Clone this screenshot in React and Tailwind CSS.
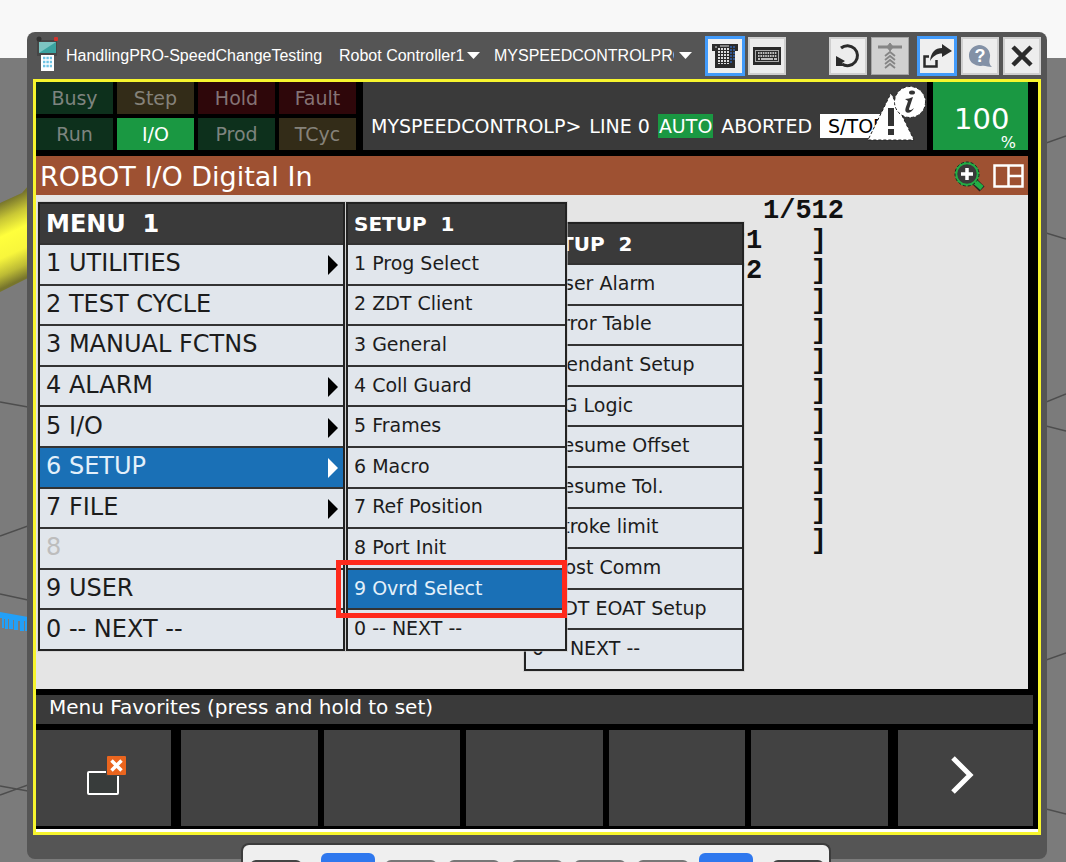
import React from "react";

const indicators = [
  { label: "Busy", style: "bg-[#0d301c] text-[#7d847f]" },
  { label: "Step", style: "bg-[#332c18] text-[#85827a]" },
  { label: "Hold", style: "bg-[#2e070a] text-[#857375]" },
  { label: "Fault", style: "bg-[#2e070a] text-[#857375]" },
  { label: "Run", style: "bg-[#0d301c] text-[#7d847f]" },
  { label: "I/O", style: "bg-[#1a9842] text-white" },
  { label: "Prod", style: "bg-[#0d301c] text-[#7d847f]" },
  { label: "TCyc", style: "bg-[#332c18] text-[#85827a]" },
];

const mainMenu = [
  { label: "1 UTILITIES", sub: true },
  { label: "2 TEST CYCLE" },
  { label: "3 MANUAL FCTNS" },
  { label: "4 ALARM", sub: true },
  { label: "5 I/O", sub: true },
  { label: "6 SETUP", sub: true, active: true },
  { label: "7 FILE", sub: true },
  { label: "8", disabled: true },
  { label: "9 USER" },
  { label: "0 -- NEXT --" },
];

const setupOne = [
  { label: "1 Prog Select" },
  { label: "2 ZDT Client" },
  { label: "3 General" },
  { label: "4 Coll Guard" },
  { label: "5 Frames" },
  { label: "6 Macro" },
  { label: "7 Ref Position" },
  { label: "8 Port Init" },
  { label: "9 Ovrd Select", active: true },
  { label: "0 -- NEXT --" },
];

const setupTwo = [
  { label: "1 User Alarm" },
  { label: "2 Error Table" },
  { label: "3 iPendant Setup" },
  { label: "4 BG Logic" },
  { label: "5 Resume Offset" },
  { label: "6 Resume Tol." },
  { label: "7 Stroke limit" },
  { label: "8 Host Comm" },
  { label: "9 ZDT EOAT Setup" },
  { label: "0 -- NEXT --" },
];

const ioRows = ["r1   ]", "r2   ]", "]", "]", "]", "]", "]", "]", "]", "]", "]"];

const keys = [
  "w-[52px] mt-[9px] bg-[#6d6d6d] border-2 border-[#444] mr-[19px]",
  "w-[54px] mt-[2px] bg-[#2f78ee] mr-[10px]",
  "w-[52px] mt-[9px] bg-[#f3f3f3] border-2 border-[#777] mr-[11px]",
  "w-[52px] mt-[9px] bg-[#f3f3f3] border-2 border-[#777] mr-[11px]",
  "w-[52px] mt-[9px] bg-[#f3f3f3] border-2 border-[#777] mr-[11px]",
  "w-[52px] mt-[9px] bg-[#f3f3f3] border-2 border-[#777] mr-[11px]",
  "w-[52px] mt-[9px] bg-[#f3f3f3] border-2 border-[#777] mr-[10px]",
  "w-[54px] mt-[2px] bg-[#2f78ee] mr-[19px]",
  "w-[52px] mt-[9px] bg-[#6d6d6d] border-2 border-[#444]",
];

// robot cell seen behind the pendant window
const Scene = () => (
  <>
    <svg className="absolute left-0 top-0" width="28" height="862" fill="none" aria-hidden="true">
      <defs>
        <linearGradient id="pipe" gradientUnits="userSpaceOnUse" x1="0" y1="203" x2="33" y2="274">
          <stop offset="0" stopColor="#77752c" />
          <stop offset="0.2" stopColor="#c9c735" />
          <stop offset="0.4" stopColor="#ffff3c" />
          <stop offset="0.65" stopColor="#f8f63c" />
          <stop offset="0.85" stopColor="#bdbb35" />
          <stop offset="1" stopColor="#77752c" />
        </linearGradient>
      </defs>
      <path d="M0 203 L22 193 L28 186 V278 L0 292 Z" fill="url(#pipe)" />
      <path d="M0 402 L28 407 M0 536 L28 526 M0 594 L28 600 M0 786 L28 791 M0 795 L28 785" stroke="#4d4d4d" strokeWidth="1.5" />
      <path d="M0 612 L28 617 V631 H25 V621 H24 V631 H20 V621 H18 V630 H14 V620 H13 V629 H9 V619 H8 V629 H5 V619 H4 V628 H2 V618 H0 Z" fill="#22a0f8" />
    </svg>
    <svg className="absolute right-0 top-0" width="20" height="862" fill="none" stroke="#4d4d4d" strokeWidth="1.5" aria-hidden="true">
      <path d="M0 143 L20 136 M0 233 L20 239 M0 402 L20 394 M0 426 L20 431 M0 660 L20 653 M0 809 L20 814" />
    </svg>
  </>
);

const Menu = ({ title, items, className, titleSize, rowSize }) => (
  <nav className={"absolute flex h-[449px] flex-col border-2 border-[#222] outline outline-1 outline-[#c9c9c9]/60 " + className}>
    <h2 className={"flex h-[39px] shrink-0 items-center whitespace-pre bg-[#3a3a3a] pl-[6px] font-bold text-white " + titleSize}>{title}</h2>
    <ul className="grid flex-1 auto-rows-fr">
      {items.map((item) => (
        <li key={item.label} className="flex border-t-2 border-[#333]">
          <button
            disabled={item.disabled}
            className={
              "flex w-full items-center justify-between whitespace-nowrap pb-[2px] pl-[6px] pr-[5px] text-left leading-none " +
              rowSize +
              (item.active ? " bg-[#1a70b6] text-[#e4f0fa]" : item.disabled ? " bg-[#e1e6ec] text-[#bdbdbd]" : " bg-[#e1e6ec] text-[#1c1c1c]")
            }
          >
            {item.label}
            {item.sub && (
              <svg width="10" height="20" viewBox="0 0 10 20" className={item.active ? "mt-1 text-white" : "mt-1 text-black"}>
                <path d="M0 0 L10 10 L0 20 Z" fill="currentColor" />
              </svg>
            )}
          </button>
        </li>
      ))}
    </ul>
  </nav>
);

const ToolButton = ({ label, on, dim, children }) => (
  <button
    aria-label={label}
    className={
      "flex shrink-0 items-center justify-center " +
      (on ? "h-10 w-10 border-3 border-[#429bfb] bg-[#efefef]" : dim ? "h-[38px] w-[38px] border border-[#a5a5a5] bg-[#d0d0d0]" : "h-[38px] w-[38px] border-2 border-[#cfcfcf] bg-[#ededed]")
    }
  >
    {children}
  </button>
);

const Caret = () => (
  <svg width="13" height="7" viewBox="0 0 13 7" className="shrink-0" aria-hidden="true">
    <path d="M0 0 H13 L6.5 7 Z" fill="#fff" />
  </svg>
);

const TitleBar = () => (
  <header className="flex h-[47px] items-center pl-[3px] font-['Liberation_Sans',Arial,sans-serif] text-base text-white">
    <svg width="22" height="36" viewBox="0 0 22 36" className="mb-[3px] mr-2 shrink-0" aria-hidden="true">
      <path d="M1 4 H21 V20 H1 Z" fill="#464646" />
      <circle cx="3" cy="3" r="2.5" fill="#333" />
      <rect x="18" y="1" width="4" height="4" rx="1" fill="#d5332c" />
      <rect x="3" y="6" width="17" height="11" fill="#3aa3a0" />
      <path d="M3 6 H20 L3 17 Z" fill="#7cc5c2" />
      <rect x="5" y="19" width="13" height="16" fill="#fff" />
      <path d="M7 22 H16 M7 26 H16 M7 30 H16" stroke="#6fc4e4" strokeWidth="2.5" strokeDasharray="2.4 1" />
    </svg>
    <h1 className="w-[273px] shrink-0 whitespace-nowrap">HandlingPRO-SpeedChangeTesting</h1>
    <select aria-label="Controller" className="w-[128px] shrink-0 appearance-none bg-transparent">
      <option>Robot Controller1</option>
    </select>
    <Caret />
    <select aria-label="Program" className="ml-[14px] w-[180px] shrink-0 appearance-none overflow-hidden bg-transparent">
      <option>MYSPEEDCONTROLPROG</option>
    </select>
    <span className="ml-[5px]"><Caret /></span>
    <div className="ml-[13px] flex items-center gap-[3px]">
      <ToolButton label="Show keypad" on>
        <svg width="28" height="26" viewBox="0 0 28 26">
          <path d="M1 1 H27 V8 H24 V25 H4 V8 H1 Z" fill="#2b2b2b" />
          <path d="M8 5 V21 M11 5 V21 M14 5 V21 M17 5 V21" stroke="#ddd" strokeWidth="2" strokeDasharray="2 1" />
          <path d="M20 3 V21 M23 3 V17" stroke="#2f5590" strokeWidth="2" strokeDasharray="2 1" />
          <path d="M4 4 H6 M9 3 H18" stroke="#ddd" strokeWidth="1" />
        </svg>
      </ToolButton>
      <ToolButton label="Keyboard">
        <svg width="28" height="18" viewBox="0 0 28 18">
          <rect x="0" y="0" width="28" height="18" fill="#2b2b2b" />
          <rect x="2.5" y="3.5" width="23" height="11" stroke="#aaa" strokeWidth="1" fill="#2b2b2b" />
          <path d="M5 6 H24 M5 9 H24" stroke="#eee" strokeWidth="1.6" strokeDasharray="1.6 0.8" />
          <path d="M5 12 H7 M8 12 H20 M21 12 H24" stroke="#eee" strokeWidth="1.6" />
        </svg>
      </ToolButton>
    </div>
    <div className="ml-auto flex items-center gap-1">
      <ToolButton label="Reload">
        <svg width="28" height="28" viewBox="0 0 28 28" fill="none">
          <path d="M7 6 A10 10 0 1 1 8 22" stroke="#2b2b2b" strokeWidth="3" />
          <path d="M2 14 L11 19 L8 21 L9 24 L2 24 Z" fill="#2b2b2b" />
        </svg>
      </ToolButton>
      <ToolButton label="Robot axes" dim>
        <svg width="26" height="28" viewBox="0 0 26 28" fill="none" stroke="#858585">
          <path d="M1 5 H25" strokeWidth="3" />
          <path d="M13 1 L16 5 L13 9 L10 5 Z" fill="#858585" />
          <path d="M8 14 L13 10 L18 14 M8 18 L13 14 L18 18 M8 22 L13 18 L18 22 M8 26 L13 22 L18 26" strokeWidth="1.8" />
        </svg>
      </ToolButton>
      <span className="w-0" />
      <ToolButton label="Detach window" on>
        <svg width="30" height="26" viewBox="0 0 30 26" fill="none" className="shrink-0">
          <path d="M7 13.500 H2.500 V23.500 H14.500 V17" stroke="#2b2b2b" strokeWidth="2.500" />
          <path d="M8 18 C9 9 13 5 20 5 V1 L30 8 L20 14 V10.500 C15 10.500 11 13 8 18 Z" fill="#2b2b2b" />
        </svg>
      </ToolButton>
      <ToolButton label="Help">
        <span className="relative flex h-[24px] w-[26px] items-center justify-center">
          <svg width="26" height="24" viewBox="0 0 26 24" className="absolute left-0 top-0">
            <path d="M12 1 A11 10.500 0 1 0 14 22 C18 21 21 23 25 23 C22 20 22 18 23 13 A11 11 0 0 0 12 1 Z" fill="#8391a6" />
          </svg>
          <span className="relative text-lg font-bold leading-none">?</span>
        </span>
      </ToolButton>
      <ToolButton label="Close">
        <svg width="22" height="22" viewBox="0 0 22 22">
          <path d="M2 2 L20 20 M20 2 L2 20" stroke="#2b2b2b" strokeWidth="4.500" />
        </svg>
      </ToolButton>
    </div>
  </header>
);

const StatusBar = () => (
  <div className="flex h-[68px] text-[19px] leading-6">
    <div className="grid shrink-0 grid-cols-[repeat(4,77px)] grid-rows-2 gap-1">
      {indicators.map((item) => (
        <span key={item.label} className={"flex items-center justify-center pb-px " + item.style}>
          {item.label}
        </span>
      ))}
    </div>
    <div className="relative ml-[7px] flex flex-1 items-end gap-2 overflow-hidden whitespace-nowrap bg-[#3a3a3a] pb-3 pl-2 text-white">
      <span>MYSPEEDCONTROLP&gt;</span>
      <span>LINE 0</span>
      <span className="bg-[#1a9842] px-px">AUTO</span>
      <span>ABORTED</span>
      <span className="bg-white px-2 text-black">S/TOP</span>
      <svg width="60" height="58" viewBox="0 0 60 58" className="absolute right-0 top-1" aria-label="Alarm information" fill="none">
        <path d="M24 8 H60 V58 H47 Z" fill="#3a3a3a" />
        <path d="M24 7 L47 54 H1 Z" fill="#fff" stroke="#222" strokeWidth="1" strokeDasharray="3 2" />
        <path d="M21 22 H27 V40 H21 Z M21 43 H27 V49 H21 Z" fill="#333" />
        <circle cx="43" cy="16" r="15.500" fill="#fff" stroke="#222" strokeWidth="1" strokeDasharray="3 2" />
        <ellipse cx="45" cy="6.500" rx="3" ry="2" fill="#333" />
        <path d="M38 13 C41 13 43 12 46 11 L42 23 C42 25 45 24 47 22 C45 26 41 28 39 26 C37 24 40 19 41 15 C40 14 39 14 38 13 Z" fill="#333" />
      </svg>
    </div>
    <div className="ml-[6px] w-[95px] shrink-0 bg-[#1a9842] pt-[21px] text-white">
      <p className="pl-[21px] text-[29px] leading-8">100</p>
      <p className="pr-3 text-right text-base leading-none">%</p>
    </div>
  </div>
);

const SoftKey = ({ label, children }) => (
  <button aria-label={label} className="flex items-center justify-center bg-[#424242] pb-[6px]">
    {children}
  </button>
);

const App = () => {
  return (
    <div className="relative flex min-h-screen flex-col overflow-hidden bg-[#7b7b7b] font-['DejaVu_Sans',Verdana,sans-serif]">
      <div className="absolute inset-x-0 top-0 h-[58px] bg-[#f8f8f8]" />
      <Scene />

      <main className="relative ml-[27px] mr-[19px] mt-8 rounded-lg bg-[#555] pb-6 pl-[6px] pr-[6px]">
        <TitleBar />

        <div className="border-3 border-[#f7f52e] bg-black">
          {/* Status area and title */}
          <div className="pr-[10px]">
            <StatusBar />
            <div className="mt-[6px] flex h-[39px] items-center bg-[#9e5132] pl-1 pr-1 text-white">
              <h2 className="pt-[3px] text-[27px] leading-8">ROBOT I/O Digital In</h2>
              <button aria-label="Zoom in" className="ml-auto mr-2">
                <svg width="32" height="32" viewBox="0 0 32 32" fill="none">
                  <path d="M21 21 L29 29" stroke="#222" strokeWidth="7" />
                  <path d="M21 21 L29 28" stroke="#23ad45" strokeWidth="5" />
                  <circle cx="14" cy="14" r="11" fill="#3a3a3a" stroke="#23ad45" strokeWidth="2.500" />
                  <circle cx="14" cy="14" r="12" stroke="#222" strokeWidth="1" strokeDasharray="3 2" />
                  <path d="M14 8 V20 M8 14 H20" stroke="#fff" strokeWidth="3.500" />
                </svg>
              </button>
              <button aria-label="Split screen">
                <svg width="31" height="24" viewBox="0 0 31 24" fill="none" stroke="#fff" strokeWidth="2.500">
                  <path d="M1.500 1.500 H29.500 V22.500 H1.500 Z M15.500 1.500 V22.500 M15.500 12 H29.500" />
                </svg>
              </button>
            </div>

            {/* I/O list with the menus opened over it */}
            <div className="relative h-[494px] bg-[#e5e5e5] pt-px font-['Liberation_Mono','Courier_New',monospace] text-[27px] font-bold leading-[30px] text-[#111]">
              <p className="pl-[727px]">1/512</p>
              <ul className="w-[791px] text-right">
                {ioRows.map((row, i) => (
                  <li key={i} className="whitespace-pre">{row}</li>
                ))}
              </ul>

              <div className="font-['DejaVu_Sans',Verdana,sans-serif] font-normal">
                <Menu title="SETUP  2" items={setupTwo} className="left-[488px] top-[27px] w-[220px]" titleSize="text-[20px]" rowSize="text-[19px]" />
                <Menu title="MENU  1" items={mainMenu} className="left-[2px] top-[7px] w-[307px]" titleSize="text-[24px]" rowSize="text-[24px]" />
                <Menu title="SETUP  1" items={setupOne} className="left-[310px] top-[7px] w-[221px]" titleSize="text-[20px]" rowSize="text-[19px]" />
                <div className="pointer-events-none absolute left-[300px] top-[365px] h-[58px] w-[231px] border-[5px] border-[#ff2a1c]" />
              </div>
            </div>
          </div>

          {/* Favorites */}
          <div className="pr-[5px]">
            <h2 className="mt-[6px] h-[29px] bg-[#3a3a3a] pl-[13px] text-[20px] leading-6 text-white">Menu Favorites (press and hold to set)</h2>
            <div className="mt-[6px] flex h-24 gap-[10px]">
              <div className="grid flex-[135]">
                <SoftKey label="Close menu">
                  <svg width="40" height="40" viewBox="0 0 40 40" fill="none" className="ml-1">
                    <rect x="2" y="17" width="30" height="22" rx="1" fill="#383c3b" stroke="#fff" strokeWidth="2" />
                    <rect x="20" y="0" width="21" height="21" fill="#424242" />
                    <rect x="21" y="1" width="19" height="19" rx="1" fill="#ea651e" />
                    <path d="M25.500 5.500 L35.500 15.500 M35.500 5.500 L25.500 15.500" stroke="#fff" strokeWidth="3.500" />
                  </svg>
                </SoftKey>
              </div>
              <div className="grid flex-[707] grid-cols-5 gap-[6px]">
                <SoftKey label="Favorite 1" />
                <SoftKey label="Favorite 2" />
                <SoftKey label="Favorite 3" />
                <SoftKey label="Favorite 4" />
                <SoftKey label="Favorite 5" />
              </div>
              <div className="grid flex-[135]">
                <SoftKey label="Next page">
                  <svg width="24" height="40" viewBox="0 0 24 40" fill="none" className="mr-2">
                    <path d="M3 3 L20 20 L3 37" stroke="#fff" strokeWidth="5" />
                  </svg>
                </SoftKey>
              </div>
            </div>
          </div>
          <div className="mt-[3px] h-[3px] bg-white" />
        </div>
      </main>

      {/* Top edge of the pendant keypad */}
      <div className="relative -mt-4 ml-[241px] flex h-5 w-[590px] overflow-hidden rounded-t-lg border-2 border-b-0 border-[#3c3c3c] bg-[#efefef] pl-[7px] pt-[6px]">
        {keys.map((style, i) => (
          <div key={i} className={"h-6 shrink-0 rounded-t-md " + style} />
        ))}
      </div>
    </div>
  );
};

export default App;
